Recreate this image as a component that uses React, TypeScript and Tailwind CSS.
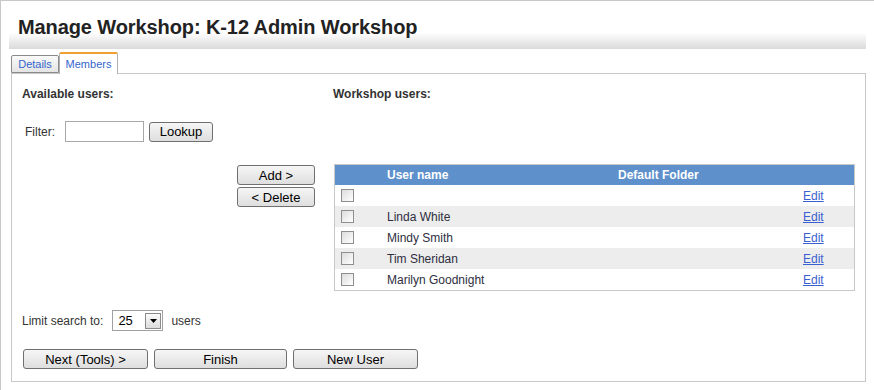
import React from 'react';

const users = ['', 'Linda White', 'Mindy Smith', 'Tim Sheridan', 'Marilyn Goodnight'];

const btn =
    'flex items-center justify-center rounded-[3px] border border-[#707070] bg-[linear-gradient(to_bottom,#f6f6f6,#dedede)] text-[13px] leading-none text-black';

const Checkbox = () => (
    <span className="block w-[13px] h-[13px] border border-[#8e8e8e] bg-[linear-gradient(135deg,#dcdcdc,#ffffff)]" />
);

export default function App() {
    return (
        <div className="w-[874px] h-[390px] overflow-hidden bg-white border-t border-l border-[#c8c8c8] font-['Liberation_Sans',Arial,sans-serif] text-[#333]">
            {/* Header */}
            <div className="ml-[8px] w-[857px] h-[48px] bg-[linear-gradient(to_bottom,#ffffff_66%,#dadada)] pl-[9px] pt-[14px]">
                <h1 className="text-[20px] leading-[24px] font-bold text-[#222] tracking-[-0.1px]">Manage Workshop: K-12 Admin Workshop</h1>
            </div>

            {/* Tabs */}
            <div className="ml-[10px] h-[24px] flex items-end">
                <div className="h-[18px] w-[48px] flex items-center justify-center border border-[#8a8a8a] rounded-t-[2px] bg-[linear-gradient(to_bottom,#fafafa,#e4e4e4)] text-[11px] text-[#3366cc]">
                    Details
                </div>
                <div className="relative z-10 -mb-px h-[22px] w-[59px] flex items-center justify-center border-x border-[#b0b0b0] border-t-2 border-t-[#f0a030] rounded-t-[2px] bg-white text-[11px] text-[#3366cc]">
                    Members
                </div>
            </div>

            {/* Panel */}
            <div className="ml-[10px] w-[855px] h-[309px] border border-[#c8c8c8] pl-[10px] pt-[13px]">
                <div className="flex">
                    {/* Left column */}
                    <div className="w-[311px]">
                        <div className="h-[14px] leading-[14px] text-[12px] font-bold">Available users:</div>
                        <div className="mt-[20px] flex items-center h-[21px] pl-[3px] text-[12px]">
                            <span>Filter:</span>
                            <input className="ml-[10px] w-[79px] h-[21px] border border-[#a8a8a8] outline-none" />
                            <button className={`${btn} ml-[5px] w-[64px] h-[20px]`}>Lookup</button>
                        </div>
                        <div className="mt-[23px] ml-[215px] flex flex-col gap-[2px]">
                            <button className={`${btn} w-[78px] h-[20px]`}>Add &gt;</button>
                            <button className={`${btn} w-[78px] h-[20px]`}>&lt; Delete</button>
                        </div>
                    </div>

                    {/* Right column */}
                    <div>
                        <div className="h-[14px] leading-[14px] text-[12px] font-bold">Workshop users:</div>
                        <div className="mt-[63px] ml-px w-[521px] border border-[#c8c8c8] text-[12px]">
                            <div className="h-[20px] bg-[#5e90cb] flex items-center text-white font-bold">
                                <span className="w-[52px]" />
                                <span className="w-[231px]">User name</span>
                                <span>Default Folder</span>
                            </div>
                            {users.map((u, i) => (
                                <div key={i} className={`h-[21px] flex items-center ${i % 2 === 1 ? 'bg-[#ededed]' : 'bg-white'}`}>
                                    <span className="w-[52px] pl-[6px]">
                                        <Checkbox />
                                    </span>
                                    <span className="w-[416px] text-[#2e2e3e]">{u}</span>
                                    <a href="#" className="text-[#3a5fd0] underline">Edit</a>
                                </div>
                            ))}
                        </div>
                    </div>
                </div>

                {/* Limit */}
                <div className="mt-[19px] flex items-center h-[21px] text-[12px]">
                    <span>Limit search to:</span>
                    <div className="ml-[9px] w-[51px] h-[21px] border border-[#a0a0a0] flex items-center justify-between pl-[5px] pr-[1px]">
                        <span className="text-[13px] text-black">25</span>
                        <span className="w-[16px] h-[16px] border border-[#8a8a8a] bg-[linear-gradient(to_bottom,#fbfbfb,#dcdcdc)] flex items-center justify-center">
                            <svg width="7" height="4" viewBox="0 0 7 4">
                                <path d="M0 0h7L3.5 4z" fill="#000" />
                            </svg>
                        </span>
                    </div>
                    <span className="ml-[8px]">users</span>
                </div>

                {/* Bottom buttons */}
                <div className="mt-[18px] ml-[1px] flex gap-[6px]">
                    <button className={`${btn} w-[125px] h-[20px]`}>Next (Tools) &gt;</button>
                    <button className={`${btn} w-[133px] h-[20px]`}>Finish</button>
                    <button className={`${btn} w-[125px] h-[20px]`}>New User</button>
                </div>
            </div>
        </div>
    );
}
